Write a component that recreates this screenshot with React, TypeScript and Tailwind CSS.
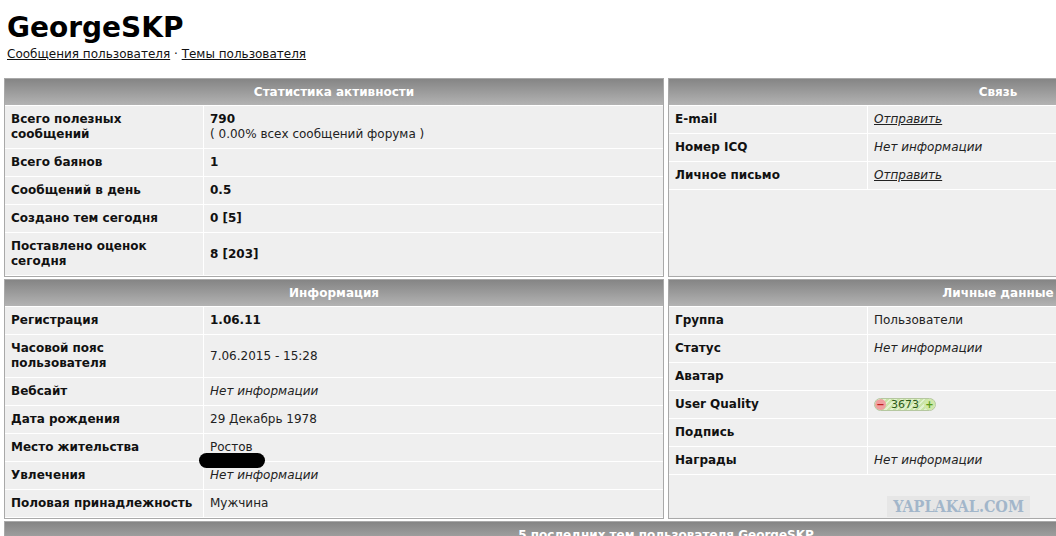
import type { ReactNode } from "react";

type Row = { label: ReactNode; value: ReactNode };

const font = { fontFamily: '"DejaVu Sans", Verdana, sans-serif' };

const none = <i className="text-[#222]">Нет информации</i>;
const send = (
  <a href="#" className="italic underline text-[#222]">
    Отправить
  </a>
);

function Header({ title }: { title: string }) {
  return (
    <div className="h-[27px] shrink-0 flex items-center justify-center border-b border-white bg-gradient-to-b from-[#858585] to-[#b3b3b3] text-white font-bold text-[12px]">
      {title}
    </div>
  );
}

function Panel({ title, rows }: { title: string; rows: Row[] }) {
  return (
    <div className="flex flex-col border border-[#a9a9a9] bg-[#efefef]">
      <Header title={title} />
      {rows.map((r, i) => (
        <div key={i} className="flex border-b border-white text-[12px] leading-[15px]">
          <div className="w-[198px] shrink-0 px-[6px] py-[6px] font-bold text-[#111] flex items-center">
            {r.label}
          </div>
          <div className="flex-1 border-l border-white px-[6px] py-[6px] text-[#222] flex items-center">
            <div>{r.value}</div>
          </div>
        </div>
      ))}
      <div className="flex-1" />
    </div>
  );
}

function QualityBadge() {
  return (
    <div className="flex items-center h-[13px] w-[62px] rounded-full border border-[#b5c7a0] overflow-hidden bg-[repeating-linear-gradient(135deg,#c9e4a8_0px,#c9e4a8_2px,#e2f1cf_2px,#e2f1cf_4px)]">
      <span className="w-[11px] h-[11px] rounded-full bg-[#f0a0a0] text-[#c02020] text-[10px] leading-[10px] flex items-center justify-center font-bold">
        −
      </span>
      <span className="flex-1 text-center text-[11px] leading-[11px] text-[#2d5a1a]">3673</span>
      <span className="w-[11px] h-[11px] rounded-full bg-[#cfe8a8] text-[#5a9a1a] text-[10px] leading-[10px] flex items-center justify-center font-bold">
        +
      </span>
    </div>
  );
}

export default function App() {
  const stats: Row[] = [
    {
      label: (
        <>
          Всего полезных
          <br />
          сообщений
        </>
      ),
      value: (
        <>
          <b className="text-[#111]">790</b>
          <br />( 0.00% всех сообщений форума )
        </>
      ),
    },
    { label: "Всего баянов", value: <b className="text-[#111]">1</b> },
    { label: "Сообщений в день", value: <b className="text-[#111]">0.5</b> },
    { label: "Создано тем сегодня", value: <b className="text-[#111]">0 [5]</b> },
    {
      label: (
        <>
          Поставлено оценок
          <br />
          сегодня
        </>
      ),
      value: <b className="text-[#111]">8 [203]</b>,
    },
  ];

  const contact: Row[] = [
    { label: "E-mail", value: send },
    { label: "Номер ICQ", value: none },
    { label: "Личное письмо", value: send },
  ];

  const info: Row[] = [
    { label: "Регистрация", value: <b className="text-[#111]">1.06.11</b> },
    {
      label: (
        <>
          Часовой пояс
          <br />
          пользователя
        </>
      ),
      value: "7.06.2015 - 15:28",
    },
    { label: "Вебсайт", value: none },
    { label: "Дата рождения", value: "29 Декабрь 1978" },
    { label: "Место жительства", value: "Ростов" },
    { label: "Увлечения", value: none },
    { label: "Половая принадлежность", value: "Мужчина" },
  ];

  const personal: Row[] = [
    { label: "Группа", value: "Пользователи" },
    { label: "Статус", value: none },
    { label: "Аватар", value: <span>&nbsp;</span> },
    { label: "User Quality", value: <QualityBadge /> },
    { label: "Подпись", value: <span>&nbsp;</span> },
    { label: "Награды", value: none },
  ];

  return (
    <div className="relative w-[1056px] h-[536px] overflow-hidden bg-white text-[#111]" style={font}>
      <div className="w-[1330px] px-[4px]">
        <h1 className="pl-[3px] pt-[11px] text-[28px] leading-[34px] font-bold text-black">GeorgeSKP</h1>
        <div className="pl-[3px] pt-[2px] text-[12px] leading-[15px] text-[#111]">
          <a href="#" className="underline">
            Сообщения пользователя
          </a>{" "}
          ·{" "}
          <a href="#" className="underline">
            Темы пользователя
          </a>
        </div>

        <div className="mt-[16px] grid grid-cols-[660px_660px] gap-x-[4px] gap-y-[2px]">
          <Panel title="Статистика активности" rows={stats} />
          <Panel title="Связь" rows={contact} />
          <Panel title="Информация" rows={info} />
          <Panel title="Личные данные" rows={personal} />
          <div className="col-span-2 border border-[#a9a9a9]">
            <Header title="5 последних тем пользователя GeorgeSKP" />
          </div>
        </div>
      </div>

      {/* blacked-out address */}
      <div className="absolute left-[199px] top-[453px] w-[66px] h-[15px] rounded-full bg-black" />

      {/* site watermark */}
      <div
        className="absolute left-[887px] top-[496px] w-[143px] h-[21px] bg-[#e6e6e6] flex items-center justify-center text-[16px] font-bold text-[#a2b6ca]"
        style={{ fontFamily: '"DejaVu Serif Condensed", "DejaVu Serif", serif', fontStretch: "condensed" }}
      >
        YAPLAKAL.COM
      </div>
    </div>
  );
}
